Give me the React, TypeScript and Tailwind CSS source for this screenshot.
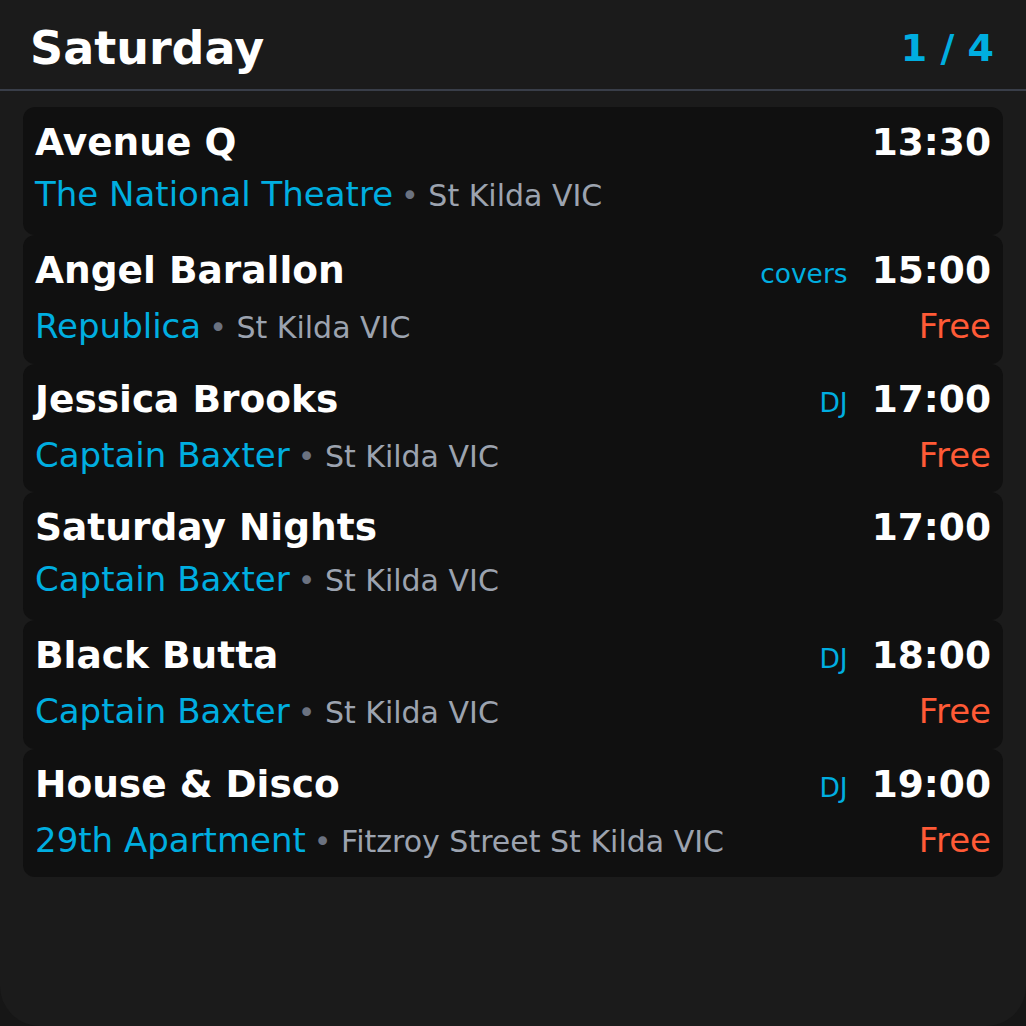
import * as React from "react";

type Gig = {
  title: string;
  venue: string;
  place: string;
  time: string;
  tag?: string;
  price?: string;
};

const gigs: Gig[] = [
  { title: "Avenue Q", venue: "The National Theatre", place: "St Kilda VIC", time: "13:30" },
  { title: "Angel Barallon", venue: "Republica", place: "St Kilda VIC", time: "15:00", tag: "covers", price: "Free" },
  { title: "Jessica Brooks", venue: "Captain Baxter", place: "St Kilda VIC", time: "17:00", tag: "DJ", price: "Free" },
  { title: "Saturday Nights", venue: "Captain Baxter", place: "St Kilda VIC", time: "17:00" },
  { title: "Black Butta", venue: "Captain Baxter", place: "St Kilda VIC", time: "18:00", tag: "DJ", price: "Free" },
  { title: "House & Disco", venue: "29th Apartment", place: "Fitzroy Street St Kilda VIC", time: "19:00", tag: "DJ", price: "Free" },
];

function GigCard({ title, venue, place, time, tag, price }: Gig) {
  return (
    <div className="h-[128.33px] rounded-xl bg-[#101010] px-3 pt-[13px]">
      <div className="flex items-baseline justify-between leading-[44px]">
        <span className="text-[37.5px] font-bold text-white">{title}</span>
        <div className="flex items-baseline gap-6">
          {tag && <span className="text-[26.5px] text-[#00aee0]">{tag}</span>}
          <span className="text-[37.5px] font-bold text-white">{time}</span>
        </div>
      </div>
      <div className="mt-[10px] flex items-baseline justify-between leading-[40px]">
        <div className="flex items-baseline gap-2">
          <span className="text-[34px] text-[#00aee0]">{venue}</span>
          <span className="text-[30px] text-[#9ca3af]">
            <span className="text-[#6b7280]">•</span> {place}
          </span>
        </div>
        {price && <span className="text-[34px] text-[#ff5a36]">{price}</span>}
      </div>
    </div>
  );
}

export default function App() {
  return (
    <div
      className="h-[1026px] w-[1026px] bg-[#161616]"
      style={{ fontFamily: '"DejaVu Sans", sans-serif' }}
    >
      <div className="h-full rounded-b-[40px] bg-[#1b1b1b]">
        <div className="flex h-[91px] items-center justify-between border-b-2 border-[#393e49] pl-[30px] pr-[32px] pt-2">
          <h1 className="text-[46px] font-bold text-white">Saturday</h1>
          <span className="text-[38px] font-bold text-[#00aee0]">1 / 4</span>
        </div>
        <div className="flex flex-col px-[23px] pt-4">
          {gigs.map((gig, i) => (
            <GigCard key={i} {...gig} />
          ))}
        </div>
      </div>
    </div>
  );
}
